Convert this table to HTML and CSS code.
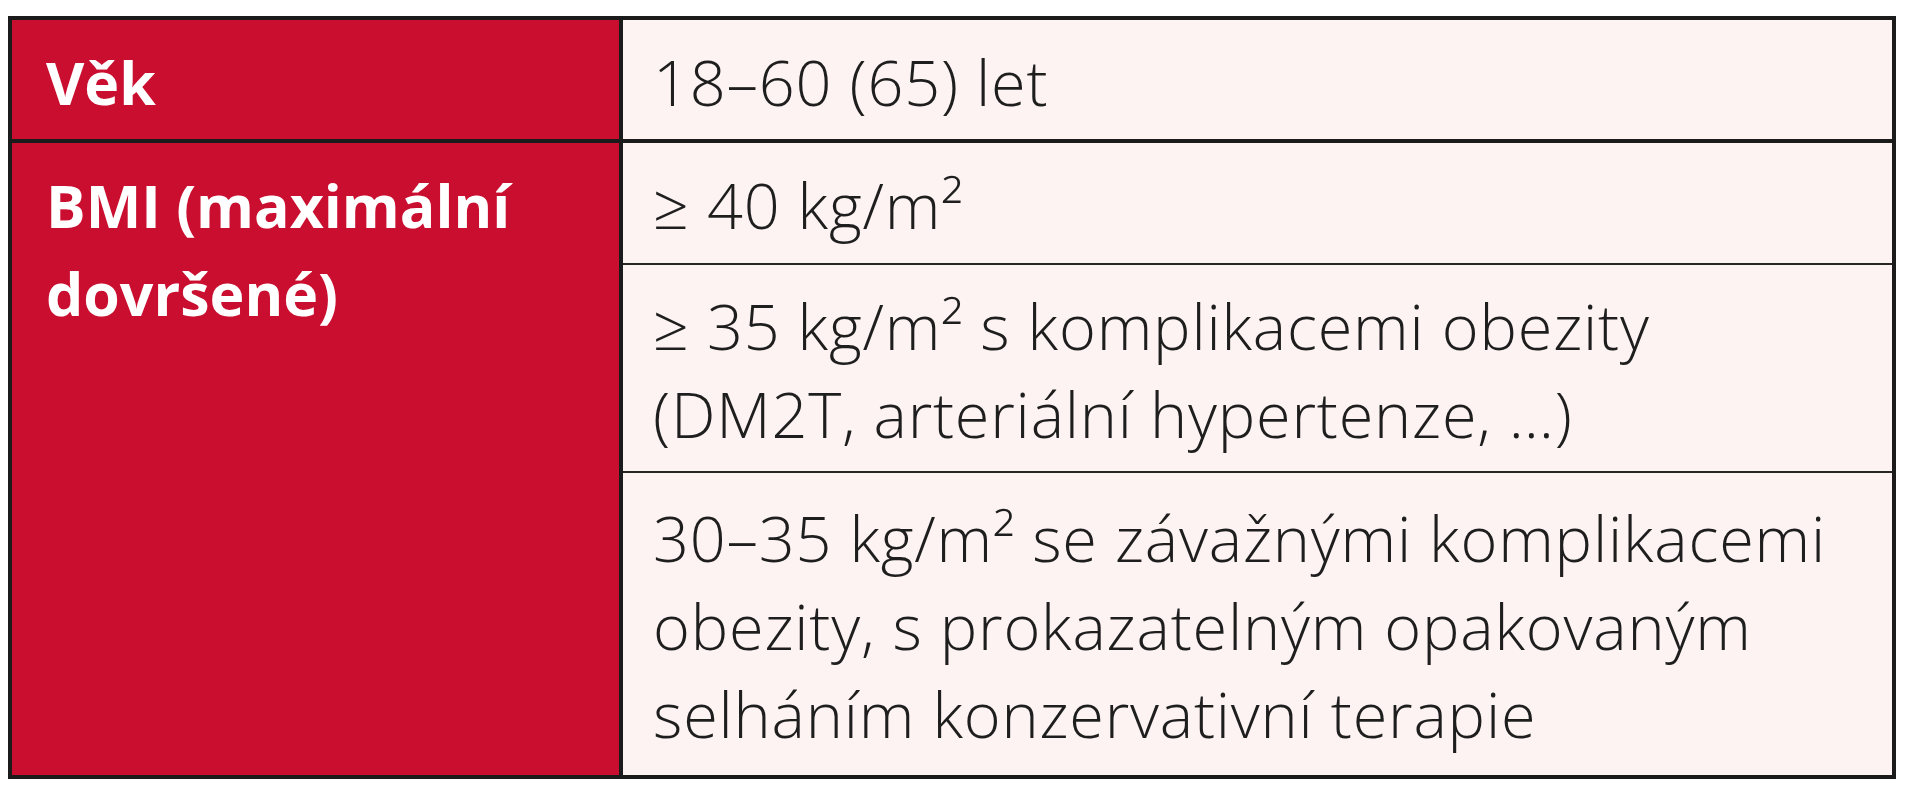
FILE: index.html
```html
<!DOCTYPE html>
<html lang="cs">
<head>
<meta charset="utf-8">
<title>Indikace</title>
<link rel="stylesheet" href="styles.css">
</head>
<body>
<table class="crit">
  <tr class="r1">
    <th class="head">Věk</th>
    <td class="val">18–60 (65) let</td>
  </tr>
  <tr class="r2">
    <th class="head head-top" rowspan="3">BMI (maximální<br>dovršené)</th>
    <td class="val">≥ 40 kg/m²</td>
  </tr>
  <tr class="r3">
    <td class="val sub">≥ 35 kg/m² s komplikacemi obezity<br>(DM2T, arteriální hypertenze, …)</td>
  </tr>
  <tr class="r4">
    <td class="val sub">30–35 kg/m² se závažnými komplikacemi<br>obezity, s prokazatelným opakovaným<br>selháním konzervativní terapie</td>
  </tr>
</table>
</body>
</html>
```

FILE: styles.css
```css
html, body {
  margin: 0;
  padding: 0;
  background: #ffffff;
}

.crit {
  margin: 16px 0 0 8px;
  width: 1888px;
  border-collapse: separate;
  border-spacing: 0;
  border: 4px solid #1b1b1b;
  font-family: "Open Sans", "Liberation Sans", sans-serif;
  line-height: 88px;
}

.head {
  width: 541px;
  background: #ca0e2f;
  color: #ffffff;
  font-size: 59px;
  font-weight: 700;
  text-align: left;
  vertical-align: middle;
  padding: 4px 32px 0 34px;
  border-right: 4px solid #1b1b1b;
  white-space: nowrap;
}

.head-top {
  vertical-align: top;
  padding-top: 18px;
}

.val {
  background: #fdf3f2;
  color: #1e1e1e;
  font-size: 63px;
  font-weight: 300;
  letter-spacing: 0.8px;
  vertical-align: middle;
  padding: 4px 30px 0 30px;
  white-space: nowrap;
}

.r1 { height: 123px; }
.r1 .head, .r1 .val { border-bottom: 4px solid #1b1b1b; }
.r2 { height: 120px; }
.r3 { height: 208px; }
.r4 { height: 304px; }

.sub { border-top: 2px solid #262626; }
```
